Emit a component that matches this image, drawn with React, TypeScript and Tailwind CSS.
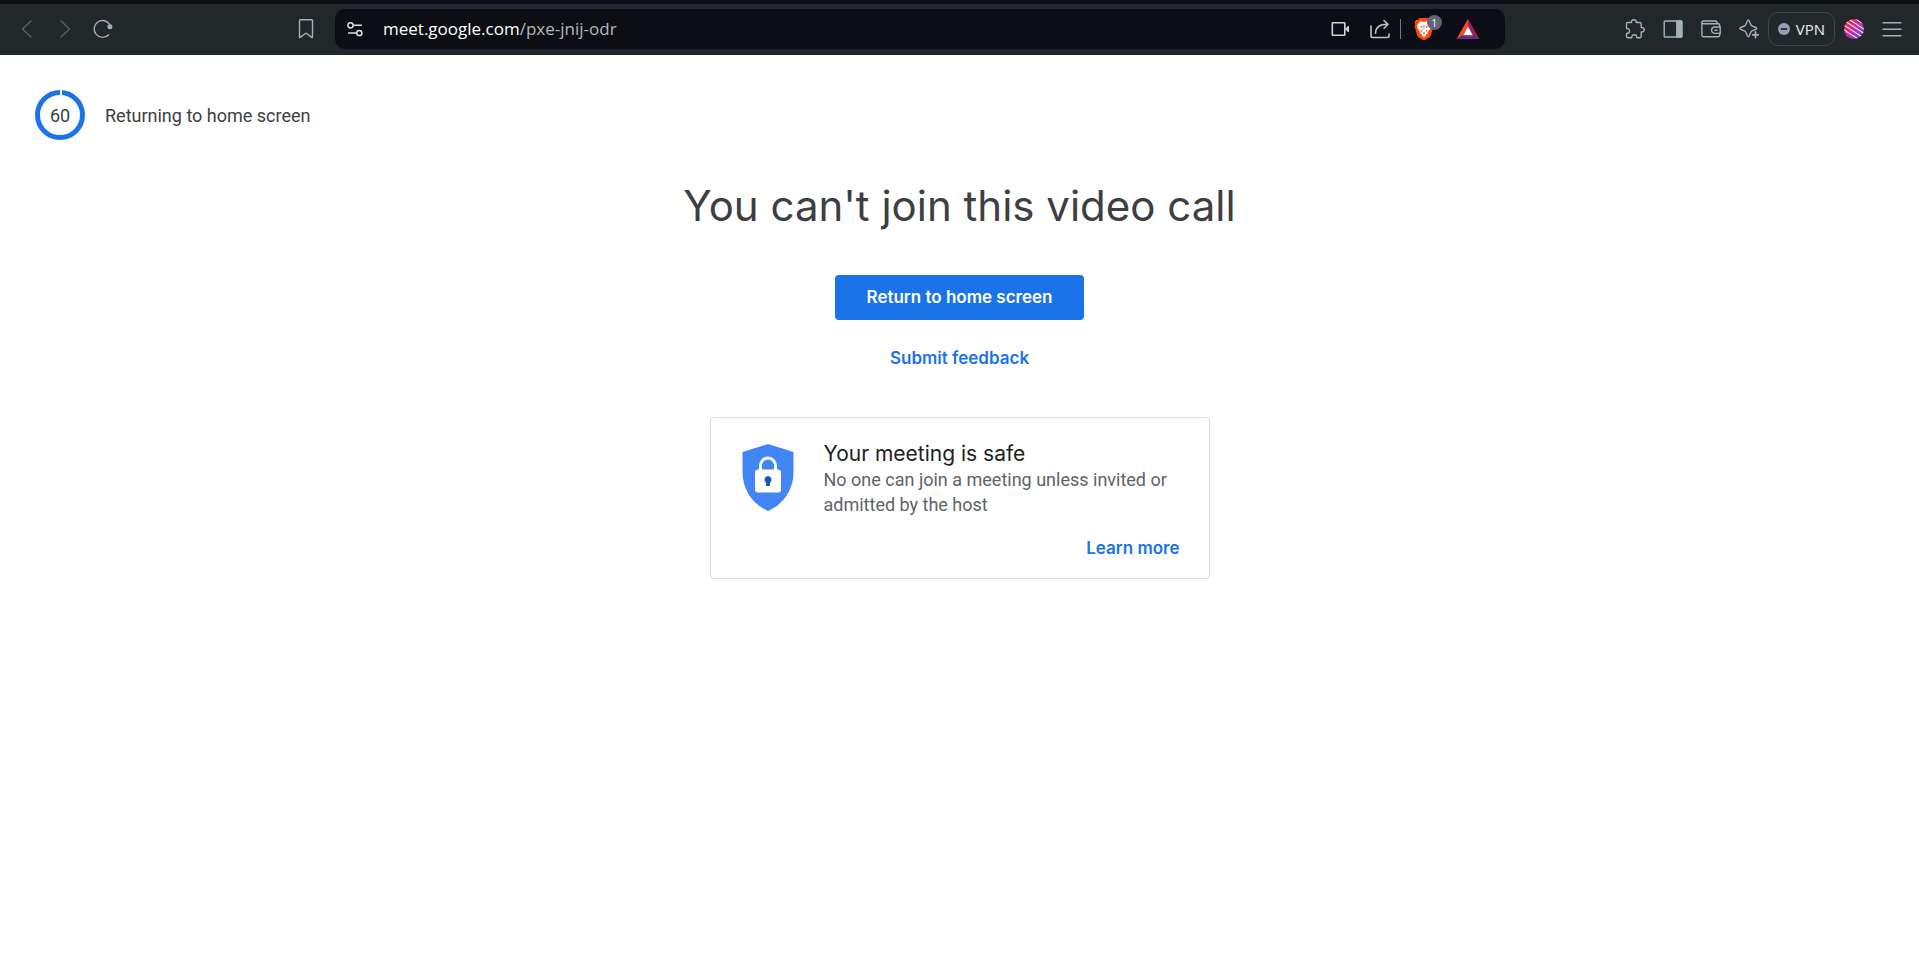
import type { ReactNode } from "react";

const ROBOTO = "font-['Roboto',sans-serif]";
const DISPLAY = "font-['Inter','Roboto',sans-serif]";

function ToolButton({ label, children }: { label: string; children: ReactNode }) {
  return (
    <button type="button" aria-label={label} className="flex h-10 w-[38px] shrink-0 items-center justify-center">
      {children}
    </button>
  );
}

function Icon({ children, stroke = "#a2b2ba", className = "size-5", width = 1.4 }: { children: ReactNode; stroke?: string; className?: string; width?: number }) {
  return (
    <svg viewBox="0 0 20 20" className={className} fill="none" stroke={stroke} strokeWidth={width} strokeLinecap="round" strokeLinejoin="round" aria-hidden="true">
      {children}
    </svg>
  );
}

function BraveLion() {
  return (
    <svg viewBox="0 0 20 24" className="h-6 w-5" aria-hidden="true">
      <path d="M5.6 1h8.8l1.7 1.9 1.7-.2 1.7 2.2-.7 2 .7 2.2-2.6 9.2c-.3 1-.8 1.6-1.6 2.1L10 23.6l-5.300-3.200c-.8-.5-1.300-1.100-1.600-2.100L.5 9.100l.7-2.200-.7-2L2.200 2.700l1.700.2z" fill="#fb4a0b" />
      <path d="M6.300 4.300 10 5l3.700-.7 3.300 4-.8 1.700.3 1.500-2.700 3.400v1.700l-1.900 1 .4.800L10 20.200l-2.300-1.800.4-.8-1.900-1v-1.700L3.500 11.500l.3-1.500L3 8.300z" fill="#fff" />
      <path d="m5 8.700 3.600.8-.7 1.300zM15 8.700l-3.600.8.7 1.300zM9.500 8h1l-.3 4.800h-.4zM6.300 12.300l2.300 1.700-1.300.8zM13.700 12.300 11.400 14l1.300.8zM8.300 16.200l1.700-.9 1.700.9-1.700.7z" fill="#fb4a0b" />
    </svg>
  );
}

function Toolbar() {
  return (
    <header className="flex h-[55px] items-center border-t-4 border-[#0d0e13] bg-[#22272a] px-2 pb-px">
      <ToolButton label="Back">
        <Icon stroke="#56616a"><path d="M14 2 5.500 10l8.500 8" /></Icon>
      </ToolButton>
      <ToolButton label="Forward">
        <Icon stroke="#56616a"><path d="M6 2l8.500 8L6 18" /></Icon>
      </ToolButton>
      <ToolButton label="Reload">
        <Icon>
          <path d="M15.700 15.700A8.400 8.400 0 1 1 17 6" />
          <circle cx="16.900" cy="7.800" r="1.800" fill="#a2b2ba" />
        </Icon>
      </ToolButton>
      <div className="ml-[165px]">
        <ToolButton label="Bookmark this page">
          <Icon><path d="M3.500 1.500q0-.8.8-.8h11.400q.8 0 .8.800v16.600q0 .8-.7.300L10.600 14.500q-.6-.4-1.200 0l-5.200 3.900q-.7.500-.7-.3z" /></Icon>
        </ToolButton>
      </div>

      <div className="mr-[111px] ml-[10px] flex h-10 min-w-0 flex-1 items-center rounded-[10px] bg-[#0d0e13] pr-[25px] pl-[10px]">
        <button type="button" aria-label="Site information" className="flex size-5 items-center justify-center">
          <svg viewBox="0 0 20 20" className="size-5" fill="none" stroke="#dfe1e5" strokeWidth="1.500" strokeLinecap="round" aria-hidden="true">
            <circle cx="5.500" cy="6.300" r="2.600" /><path d="M8.800 6.300h7.500" />
            <circle cx="14.300" cy="14" r="2.600" /><path d="M3.700 14h7.500" />
          </svg>
        </button>
        <p className="ml-[18px] flex-1 font-['Open_Sans','Noto_Sans',sans-serif] text-[17px] leading-6 whitespace-nowrap text-white">
          meet.google.com<span className="text-[#b5b7bb]">/pxe-jnij-odr</span>
        </p>
        <div className="flex items-center">
          <button type="button" aria-label="Camera" className="mr-5">
            <svg viewBox="0 0 20 20" className="size-5" fill="none" stroke="#d0d2d3" strokeWidth="1.600" aria-hidden="true">
              <rect x="2.300" y="3.800" width="12.500" height="12.400" rx=".5" />
              <path d="m15.500 10 3-3v6z" fill="#d0d2d3" strokeWidth="1" />
            </svg>
          </button>
          <button type="button" aria-label="Share" className="mr-[10px]">
            <Icon stroke="#c0c2c4" width={1.600}>
              <path d="M1 7v9.800q0 1.700 1.700 1.700h14.600q1.700 0 1.700-1.700V15" />
              <path d="M5.500 14.200C5.700 8.500 9 5.300 17.500 5.300M14 1.500l4 3.800-4 3.900" />
            </Icon>
          </button>
          <div className="mr-[13px] h-5 w-px bg-[#777a7e]" />
          <button type="button" aria-label="Brave Shields" className="relative mr-[22px]">
            <BraveLion />
            <span className="absolute -top-[2px] left-[13px] flex size-[15px] items-center justify-center rounded-full bg-[#62657a] font-['Open_Sans',sans-serif] text-[10px] leading-none text-white">1</span>
          </button>
          <button type="button" aria-label="Brave Rewards">
            <svg viewBox="0 0 24 20" className="h-5 w-6" aria-hidden="true">
              <path d="M12 0 .5 20l6.700-3.800L12 7.500z" fill="#ff4724" />
              <path d="m12 0 11.500 20-6.700-3.800L12 7.500z" fill="#9e1f63" />
              <path d="M.5 20h23l-6.700-3.800H7.200z" fill="#662d91" />
              <path d="M12 7.500l4.800 8.700H7.200z" fill="#fff" />
            </svg>
          </button>
        </div>
      </div>

      <ToolButton label="Extensions">
        <Icon><path d="M2.500 3.500h4C6 1.500 7.300.800 8.800.800s2.900.7 2.400 2.700h3.500q1.500 0 1.500 1.500v3.500c2-.3 3 .8 3 2.200s-1 2.600-3 2.200v4.300q0 1.500-1.500 1.500h-2.900c.2-1.900-.9-2.900-2.500-2.900s-2.700 1-2.500 2.900H3q-1.500 0-1.500-1.500v-2.800c1.900.2 3-.8 3-2.400S3.400 9.200 1.500 9.500V5q0-1.500 1-1.500z" /></Icon>
      </ToolButton>
      <ToolButton label="Side panel">
        <Icon>
          <rect x="1.200" y="2" width="17.600" height="16" rx="1" />
          <path d="M13.800 2h4.400q.6 0 .6.600v14.800q0 .6-.6.600h-4.400z" fill="#a2b2ba" />
        </Icon>
      </ToolButton>
      <ToolButton label="Wallet">
        <Icon>
          <path d="M18.800 8V6.500q0-1.700-1.700-1.700H2.800q-1.900 0-1.900-1.400t1.900-1.400h11.700q1.500 0 1.500 1.500v1.300M.9 3.500v12.700q0 1.600 1.600 1.600h14.600q1.700 0 1.700-1.700v-1.600" />
          <path d="M19.200 8h-5.400a3.200 3.200 0 0 0 0 6.400h5.400zM14 11.200h2" />
        </Icon>
      </ToolButton>
      <ToolButton label="Leo AI">
        <Icon>
          <path d="M8.300 2q1-2.200 2 0l1.400 3.600q.4 1 1.400 1.400l3.700 1.500q1.900.9 0 1.800l-3.700 1.500q-1 .4-1.400 1.400L10.300 16.800q-1 2-2 0L6.900 13.200q-.4-1-1.400-1.400L1.800 10.300q-1.900-.9 0-1.800L5.500 7q1-.4 1.400-1.400z" />
          <path d="M16.500 13v5.600M13.700 15.800h5.600" strokeWidth="1.800" />
        </Icon>
      </ToolButton>
      <button type="button" className="flex h-[34px] shrink-0 items-center gap-[6px] rounded-[10px] border border-[#3c474b] px-[9px] font-['Open_Sans','Noto_Sans',sans-serif] text-[15px] text-[#eceef0]">
        <svg viewBox="0 0 12 12" className="size-3" aria-hidden="true">
          <circle cx="6" cy="6" r="6" fill="#9a9cb2" /><path d="M2.800 6h6.400" stroke="#22272a" strokeWidth="1.700" />
        </svg>
        VPN
      </button>
      <ToolButton label="Profile">
        <svg viewBox="0 0 20 20" className="size-5" aria-hidden="true">
          <defs>
            <linearGradient id="profile" x1="0" y1="0" x2="1" y2="1">
              <stop offset="0" stopColor="#f4292f" /><stop offset=".5" stopColor="#c72c9c" /><stop offset="1" stopColor="#4a4fe0" />
            </linearGradient>
            <clipPath id="disc"><circle cx="10" cy="10" r="10" /></clipPath>
          </defs>
          <circle cx="10" cy="10" r="10" fill="url(#profile)" />
          <path clipPath="url(#disc)" d="m6-4 18 12M3-1l20 13M1 2l20 13M-1 5.500l20 13M-2 9.500l20 13M-4 13l16 11" stroke="#fbe3f2" strokeWidth="1.100" />
        </svg>
      </ToolButton>
      <ToolButton label="Menu">
        <Icon><path d="M1 3.800h18M1 10.200h18M1 16.700h18" /></Icon>
      </ToolButton>
    </header>
  );
}

function Countdown() {
  return (
    <div className="flex items-center gap-5 px-[35px] pt-[35px]">
      <div className="relative flex size-[50px] items-center justify-center">
        <svg viewBox="0 0 50 50" className="absolute inset-0 size-full" aria-hidden="true">
          <circle cx="25" cy="25" r="22.500" fill="none" stroke="#1a73e8" strokeWidth="5" />
          <path d="M26 0v6" stroke="#fff" strokeWidth="2" />
        </svg>
        <span className="relative pt-[2px] text-[18px] leading-[26px]">60</span>
      </div>
      <p className="pt-[2px] text-[18px] leading-[26px]">Returning to home screen</p>
    </div>
  );
}

function SafetyCard() {
  return (
    <section className="mt-[46px] w-[500px] max-w-full rounded border border-[#dadce0] px-[29px] pt-[23px] pb-[17px]">
      <div className="flex gap-7">
        <svg viewBox="0 0 56 74" className="h-[74px] w-14 shrink-0" aria-hidden="true">
          <path d="M28 3 53.500 11v20C53.500 49 43 63.500 28 70 13 63.500 2.500 49 2.500 31V11z" fill="#4285f4" />
          <path d="M20.500 30v-5.500a7.500 7.500 0 0 1 15 0V30" fill="none" stroke="#fff" strokeWidth="3" />
          <rect x="15" y="28.500" width="26" height="23" rx="3" fill="#fff" />
          <path d="M28 35a3.700 3.700 0 0 0-1.900 6.800V45h3.800v-3.200A3.700 3.700 0 0 0 28 35z" fill="#185abc" />
        </svg>
        <div>
          <h2 className={`${DISPLAY} text-[21px] leading-[26px] text-[#202124]`}>Your meeting is safe</h2>
          <p className="text-[18px] leading-[25px] text-[#5f6368]">No one can join a meeting unless invited or admitted by the host</p>
        </div>
      </div>
      <div className="mt-[18px] flex justify-end">
        <a href="#learn-more" className={`${DISPLAY} text-[17px] leading-[26px] font-semibold text-[#1a73e8]`}>Learn more</a>
      </div>
    </section>
  );
}

export default function App() {
  return (
    <div className={`${ROBOTO} min-h-screen bg-white text-[#3c4043]`}>
      <Toolbar />
      <Countdown />
      <main className="flex flex-col items-center pt-[38px]">
        <h1 className={`${DISPLAY} text-[42px] leading-[56px] text-[#3c4043]`}>You can't join this video call</h1>
        <button type="button" className={`${DISPLAY} mt-[41px] h-[45px] w-[249px] rounded bg-[#1a73e8] text-[17px] font-semibold text-white`}>
          Return to home screen
        </button>
        <a href="#feedback" className={`${DISPLAY} mt-[25px] text-[17px] leading-[26px] font-semibold text-[#1a73e8]`}>Submit feedback</a>
        <SafetyCard />
      </main>
    </div>
  );
}
